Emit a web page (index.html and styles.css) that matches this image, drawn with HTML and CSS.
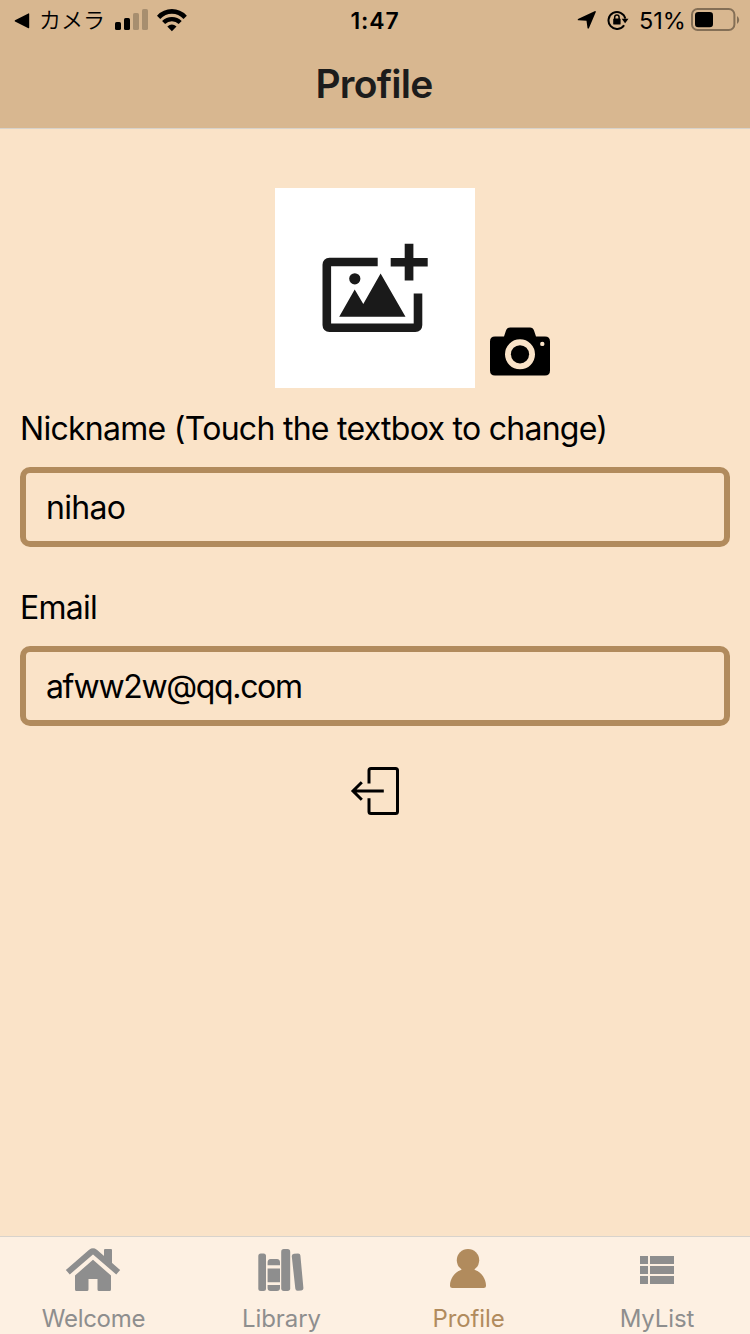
FILE: index.html
```html
<!DOCTYPE html>
<html lang="en">
<head>
<meta charset="utf-8">
<title>Profile</title>
<link rel="stylesheet" href="styles.css">
</head>
<body>
<div class="screen">
  <header class="header">
    <div class="status">
      <div class="status-left">
        <svg class="back" width="16" height="16" viewBox="0 0 16 16"><path d="M1 7.2 14.4.4Q15.2 0 15.2 1v13.6q0 1-.8.6L1 8.6Q.2 8 1 7.2Z"/></svg>
        <span class="kana">カメラ</span>
        <svg class="signal" width="34" height="22" viewBox="0 0 34 22"><rect x="0" y="13" width="6" height="8" rx="1.6"/><rect x="9" y="9" width="6" height="12" rx="1.6"/><g opacity=".22"><rect x="18" y="4" width="6" height="17" rx="1.6"/><rect x="27" y="0" width="6" height="21" rx="1.6"/></g></svg>
        <svg class="wifi" width="30" height="23" viewBox="0 0 30 23"><g fill="none" stroke="#000"><path d="M1.600 8.300Q7.300 2.400 14.900 2.400T28.200 8.300" stroke-width="4.600"/><path d="M6.600 13.600Q10 10.200 14.900 10.200T23.200 13.600" stroke-width="4.300"/></g><path d="M10.300 17.600Q14.900 13.600 19.500 17.600L14.900 22.200Z"/></svg>
      </div>
      <span class="clock">1:47</span>
      <div class="status-right">
        <svg class="locate" width="20" height="18" viewBox="0 0 20 18"><path d="M17.600.2Q19.200-.2 18.700 1.300L12 17Q11 18.600 10.500 17L9.500 9.700 1.600 9.300Q-.2 8.800 1.500 7.700Z"/></svg>
        <svg class="rotation" width="22" height="20" viewBox="0 0 22 20"><path d="M17.1 15.2A8.500 8.500 0 1 1 18.300 8.600" fill="none" stroke="#000" stroke-width="2"/><path d="M14.700 8.700h6.800l-3.400 4.500Z"/><rect x="6.200" y="8.600" width="7.400" height="6" rx=".9"/><path d="M7.700 9V7.200a2.200 2.200 0 0 1 4.400 0V9" fill="none" stroke="#000" stroke-width="1.500"/></svg>
        <span class="percent">51%</span>
        <svg class="battery" width="50" height="24" viewBox="0 0 50 24"><rect x="1" y="1" width="42.400" height="21" rx="5.600" fill="none" stroke="#846f56" stroke-width="2"/><path d="M46 8q2.200 1.400 2.200 4T46 16Z" fill="#846f56"/><rect x="4" y="4" width="18" height="15.300" rx="3.300"/></svg>
      </div>
    </div>
    <h1 class="title">Profile</h1>
  </header>

  <main class="content">
    <div class="photo-row">
      <div class="avatar">
        <svg width="200" height="200" viewBox="275 188 200 200" fill="#1a1a1a"><path d="M377.7 262H329.5Q326.8 262 326.8 264.7V325Q326.8 327.8 329.5 327.8H415.3Q418 327.8 418 325V293.4" fill="none" stroke="#1a1a1a" stroke-width="8.6"/><path d="M404.7 243.8h8.7v14.2h14.3v8.4h-14.3v14h-8.7v-14h-14v-8.4h14Z"/><circle cx="354.8" cy="278.8" r="5.6"/><path d="M339.2 316.8 354.7 289.5 363.3 304 380.6 273.6 405.5 316.8Z"/></svg>
      </div>
      <svg class="camera" width="60" height="50" viewBox="490 327 60 50"><path fill-rule="evenodd" d="M510 327.5h20q3 0 4 3l2 6h9q5 0 5 5V370.500q0 5-5 5H495q-5 0-5-5V341.500q0-5 5-5h9l2-6q1-3 4-3ZM520 339.300a15 15 0 1 0 0 30 15 15 0 1 0 0-30ZM542.300 341.700a2.200 2.200 0 1 0 0 4.400 2.200 2.200 0 1 0 0-4.400Z"/><circle cx="520" cy="354.300" r="9.100"/></svg>
    </div>
    <div class="label label-nick">Nickname (Touch the textbox to change)</div>
    <div class="field">nihao</div>
    <div class="label label-email">Email</div>
    <div class="field mail">afww2w@qq.com</div>
    <svg class="logout" width="50" height="50" viewBox="350 766 50 50" fill="none" stroke="#000" stroke-width="3"><path d="M369 783.500V770.500Q369 768.500 371 768.500H395.500Q397.500 768.500 397.500 770.500V811.500Q397.500 813.500 395.500 813.500H371Q369 813.500 369 811.500V798.200"/><path d="M353 791H383.800M361.800 782.300 353 791 361.800 799.700"/></svg>
  </main>

  <nav class="tabs">
    <div class="tab welcome">
      <svg width="60" height="50" viewBox="63 1245 60 50"><path d="M67.800 1272.200 91 1252.200Q93 1250.700 95 1252.200L118.200 1272.200" fill="none" stroke="#8e8e8e" stroke-width="6"/><path d="M104 1258V1250q0-1 1-1h6q1 0 1 1v14.500Z"/><path d="M93 1259.800 111 1275.500V1289.500q0 1.500-1.500 1.500H99q-1.500 0-1.500-1.500V1279h-9V1289.500q0 1.500-1.500 1.500H76.500q-1.500 0-1.500-1.500V1275.500Z"/></svg>
      <span>Welcome</span>
    </div>
    <div class="tab library">
      <svg width="60" height="50" viewBox="251 1245 60 50"><rect x="258.300" y="1253.500" width="7.700" height="37.500" rx="2.500"/><path d="M267.600 1265.300V1262.500q0-3.500 3-3.500h6.400q3 0 3 3.500v2.800ZM267.600 1268.500H280V1282.200H267.600ZM267.600 1285H280v3q0 3-3 3h-6.400q-3 0-3-3Z"/><rect x="281.200" y="1249" width="9" height="42" rx="2.700"/><path d="M294 1253.700l4-.3q2.200-.1 2.400 2.200l3 32.300q.2 2.300-2 2.500l-3.600.4q-2.300.1-2.500-2.200l-3.500-32.200q-.2-2.500 2.200-2.700Z"/></svg>
      <span>Library</span>
    </div>
    <div class="tab active">
      <svg width="60" height="50" viewBox="438 1245 60 50"><circle cx="468" cy="1260.200" r="11.200"/><path d="M461.500 1267.500h13v2.300C481.500 1272 486 1279 486 1285.500q0 2.500-2.500 2.500h-31q-2.500 0-2.500-2.500C450 1279 454.500 1272 461.500 1269.800Z"/></svg>
      <span>Profile</span>
    </div>
    <div class="tab mylist">
      <svg width="60" height="50" viewBox="627 1245 60 50"><path d="M640 1256h8v8h-8Zm10 0h24v8h-24Zm-10 10h8v8h-8Zm10 0h24v8h-24Zm-10 10h8v8h-8Zm10 0h24v8h-24Z"/></svg>
      <span>MyList</span>
    </div>
  </nav>
</div>
</body>
</html>
```
FILE: styles.css
```css
* { box-sizing: border-box; }
body { margin: 0; }
svg { display: block; flex: none; }

.screen {
  width: 750px;
  height: 1334px;
  display: flex;
  flex-direction: column;
  overflow: hidden;
  background: #fae3c8;
  color: #000;
  font-family: Inter, "Noto Sans CJK JP", sans-serif;
}

.header {
  height: 129px;
  flex: none;
  background: #d8b790;
  border-bottom: 1px solid #d8d3cc;
}
.status {
  height: 40px;
  display: grid;
  grid-template-columns: 1fr auto 1fr;
  align-items: center;
}
.status-left { display: flex; align-items: center; padding-left: 14px; }
.back { margin-top: 1px; }
.kana { margin: -4px 0 0 9px; width: 66px; font: 350 22px/36px "Noto Sans CJK JP", sans-serif; white-space: nowrap; }
.signal { margin-left: 10px; }
.wifi { margin-left: 8px; }
.clock { padding-top: 2px; font-size: 23px; font-weight: 600; line-height: 38px; letter-spacing: 0.9px; }
.status-right { display: flex; align-items: center; justify-content: flex-end; padding-right: 9px; }
.locate { margin-right: 10px; }
.rotation { margin-right: 10px; }
.percent { width: 47px; margin-right: 5px; padding-top: 2px; font-size: 23.5px; line-height: 38px; white-space: nowrap; }
.title {
  margin: 0;
  padding: 20px 2px 0 0;
  text-align: center;
  font-size: 39px;
  font-weight: 600;
  line-height: 48px;
  letter-spacing: -0.75px;
  color: #1c1c1c;
}

.content { flex: 1; padding: 59px 20px 0; display: flex; flex-direction: column; }
.photo-row { display: flex; align-items: flex-end; gap: 15px; padding-left: 255px; }
.avatar { width: 200px; height: 200px; background: #fff; }
.camera { margin-bottom: 11px; }
.label { font-size: 32px; line-height: 40px; letter-spacing: -0.72px; white-space: nowrap; }
.label-nick { margin-top: 21px; }
.label-email { margin-top: 41px; }
.field {
  height: 80px;
  margin-top: 18px;
  padding-left: 20px;
  border: 6px solid #b18b5d;
  border-radius: 10px;
  font-size: 32px;
  line-height: 70px;
  letter-spacing: -0.72px;
}
.mail { letter-spacing: -1.35px; }
.logout { margin: 40px 0 0 330px; }

.tabs {
  height: 98px;
  flex: none;
  display: grid;
  grid-template-columns: 186px 190px 184px 190px;
  background: #fdf0e2;
  border-top: 1px solid #d8d3cc;
}
.tab {
  display: flex;
  flex-direction: column;
  align-items: center;
  padding-top: 8px;
  font-size: 24px;
  line-height: 30px;
  letter-spacing: -0.1px;
  color: #8e8e8e;
  fill: #8e8e8e;
}
.tab span { margin-top: 9px; }
.tab.active { color: #b18b5d; fill: #b18b5d; }
.tab.active span, .tab.library span, .tab.welcome span { padding-left: 1px; }
.tab.welcome { letter-spacing: -0.3px; }
.tab.mylist { padding-left: 4px; }
```
